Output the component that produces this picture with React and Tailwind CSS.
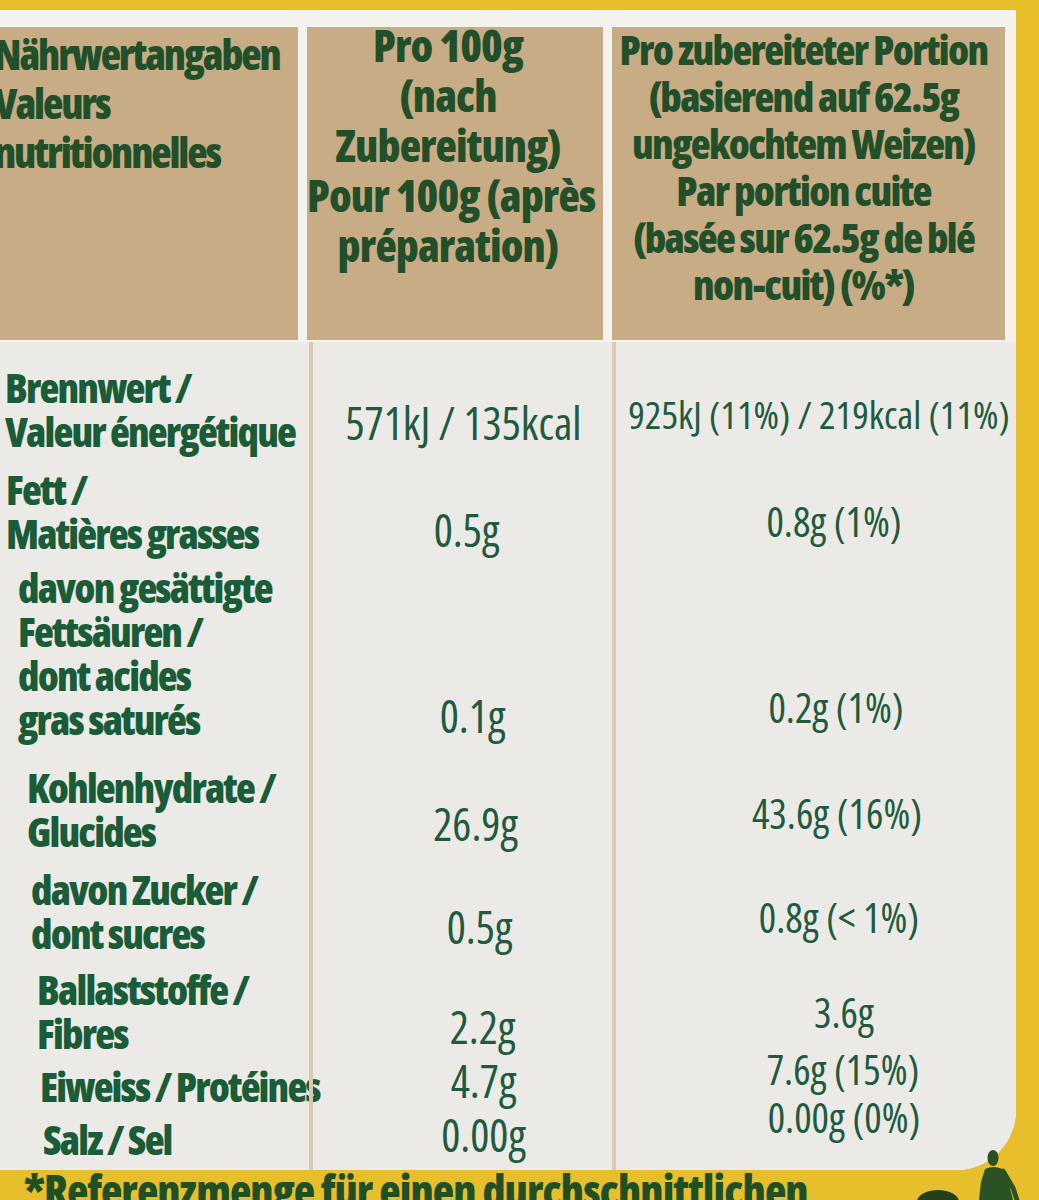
const rows = [
  {
    label: ["Brennwert /", "Valeur énergétique"],
    per100: "571kJ / 135kcal",
    portion: "925kJ (11%) / 219kcal (11%)",
    gap: "pt-[23px] pb-[14px]",
    pl: "pl-[5px]",
    mid: "pl-[2px] -translate-y-[8px]",
    right: "pl-[6px] -translate-y-[17px] text-[39px]",
  },
  {
    label: ["Fett /", "Matières grasses"],
    per100: "0.5g",
    portion: "0.8g (1%)",
    gap: "pb-[10px]",
    pl: "pl-[6px]",
    mid: "pl-[8px] -translate-y-[3px]",
    right: "pl-[36px] -translate-y-[12px] text-[41px]",
  },
  {
    label: ["davon gesättigte", "Fettsäuren /", "dont acides", "gras saturés"],
    per100: "0.1g",
    portion: "0.2g (1%)",
    gap: "pb-[24px]",
    pl: "pl-[18px]",
    mid: "pl-[20px] -translate-y-[3px]",
    right: "pl-[40px] -translate-y-[12px] text-[41px]",
  },
  {
    label: ["Kohlenhydrate /", "Glucides"],
    per100: "26.9g",
    portion: "43.6g (16%)",
    gap: "pb-[14px]",
    pl: "pl-[27px]",
    mid: "pl-[26px] -translate-y-[7px]",
    right: "pl-[42px] -translate-y-[18px] text-[41px]",
  },
  {
    label: ["davon Zucker /", "dont sucres"],
    per100: "0.5g",
    portion: "0.8g (< 1%)",
    gap: "pb-[12px]",
    pl: "pl-[31px]",
    mid: "pl-[34px] -translate-y-[6px]",
    right: "pl-[46px] -translate-y-[16px] text-[41px]",
  },
  {
    label: ["Ballaststoffe /", "Fibres"],
    per100: "2.2g",
    portion: "3.6g",
    gap: "pb-[9px]",
    pl: "pl-[37px]",
    mid: "pl-[40px] -translate-y-[6px]",
    right: "pl-[56px] -translate-y-[21px] text-[41px]",
  },
  {
    label: ["Eiweiss / Protéines"],
    per100: "4.7g",
    portion: "7.6g (15%)",
    gap: "pb-[9px]",
    pl: "pl-[40px]",
    mid: "pl-[42px] -translate-y-[5px]",
    right: "pl-[54px] -translate-y-[17px] text-[41px]",
  },
  {
    label: ["Salz / Sel"],
    per100: "0.00g",
    portion: "0.00g (0%)",
    gap: "pb-[9px]",
    pl: "pl-[43px]",
    mid: "pl-[42px] -translate-y-[4px]",
    right: "pl-[56px] -translate-y-[22px] text-[41px]",
  },
];

// little walking figure + round shape printed on the yellow band
function Walker() {
  return (
    <svg width="120" height="56" viewBox="0 0 120 56" fill="none">
      <ellipse cx="33" cy="58" rx="21" ry="12" fill="#263f1a" />
      <ellipse cx="88" cy="14" rx="5.5" ry="8" fill="#2b4f22" />
      <path
        d="M80 25 Q89 21 97 25 L104 40 L108 56 L74 56 L76 38 Z"
        fill="#2b5224"
      />
      <path
        d="M98 27 L108 44 L112 56"
        stroke="#2b5224"
        strokeWidth="5"
        strokeLinecap="round"
      />
    </svg>
  );
}

export default function App() {
  return (
    <div className="relative w-[1039px] h-[1200px] overflow-hidden bg-[#e7bf2c] font-['Open_Sans',sans-serif] font-stretch-condensed">
      <div className="pt-[10px] pr-[23px]">
        {/* label card */}
        <div className="bg-[#f4f2ec] pt-[17px] rounded-br-[60px]">
          {/* header */}
          <div className="grid grid-cols-[298px_296px_393px] gap-x-[9px] h-[313px] mr-[10px] font-extrabold text-[#214f2a]">
            <div className="bg-[#c8ac85] overflow-hidden">
              <div className="-ml-[6px] pt-[2px] text-[42px] leading-[49px] tracking-[-0.05em] whitespace-nowrap">
                <div>Nährwertangaben</div>
                <div>Valeurs</div>
                <div>nutritionnelles</div>
              </div>
            </div>
            <div className="bg-[#c8ac85]">
              <div className="-mt-[7px] pr-[14px] text-center text-[44px] leading-[50px] tracking-[-0.02em] whitespace-nowrap">
                <div>Pro 100g</div>
                <div>(nach</div>
                <div>Zubereitung)</div>
                <div>Pour 100g (après</div>
                <div>préparation)</div>
              </div>
            </div>
            <div className="bg-[#c8ac85]">
              <div className="-mt-[1px] pr-[10px] text-center text-[41px] leading-[47px] tracking-[-0.04em] whitespace-nowrap">
                <div>Pro zubereiteter Portion</div>
                <div>(basierend auf 62.5g</div>
                <div>ungekochtem Weizen)</div>
                <div>Par portion cuite</div>
                <div>(basée sur 62.5g de blé</div>
                <div>non-cuit) (%*)</div>
              </div>
            </div>
          </div>

          {/* body */}
          <div className="mt-[2px] bg-[#ebeae6] rounded-br-[60px] overflow-hidden">
            {rows.map((r, i) => (
              <div key={i} className="grid grid-cols-[309px_303px_1fr]">
                <div
                  className={`${r.pl} ${r.gap} font-extrabold text-[41px] leading-[44px] tracking-[-0.045em] text-[#1b5c38] whitespace-nowrap`}
                >
                  {r.label.map((l) => (
                    <div key={l}>{l}</div>
                  ))}
                </div>
                <div
                  className={`border-l-[4px] border-[#dac9b0] flex items-end justify-center ${r.gap}`}
                >
                  <span
                    className={`${r.mid} text-[45px] leading-[44px] text-[#215a3e] whitespace-nowrap`}
                  >
                    {r.per100}
                  </span>
                </div>
                <div
                  className={`border-l-[4px] border-[#dac9b0] flex items-end justify-center ${r.gap}`}
                >
                  <span
                    className={`${r.right} leading-[44px] text-[#215a3e] whitespace-nowrap`}
                  >
                    {r.portion}
                  </span>
                </div>
              </div>
            ))}
          </div>
        </div>
      </div>

      {/* footnote peeking out under the card */}
      <div className="-mt-[4px] pl-[24px] font-extrabold text-[44px] leading-[48px] tracking-[-0.02em] text-[#1f4f25] whitespace-nowrap">
        *Referenzmenge für einen durchschnittlichen
      </div>

      <div className="absolute left-[905px] bottom-0">
        <Walker />
      </div>
    </div>
  );
}
